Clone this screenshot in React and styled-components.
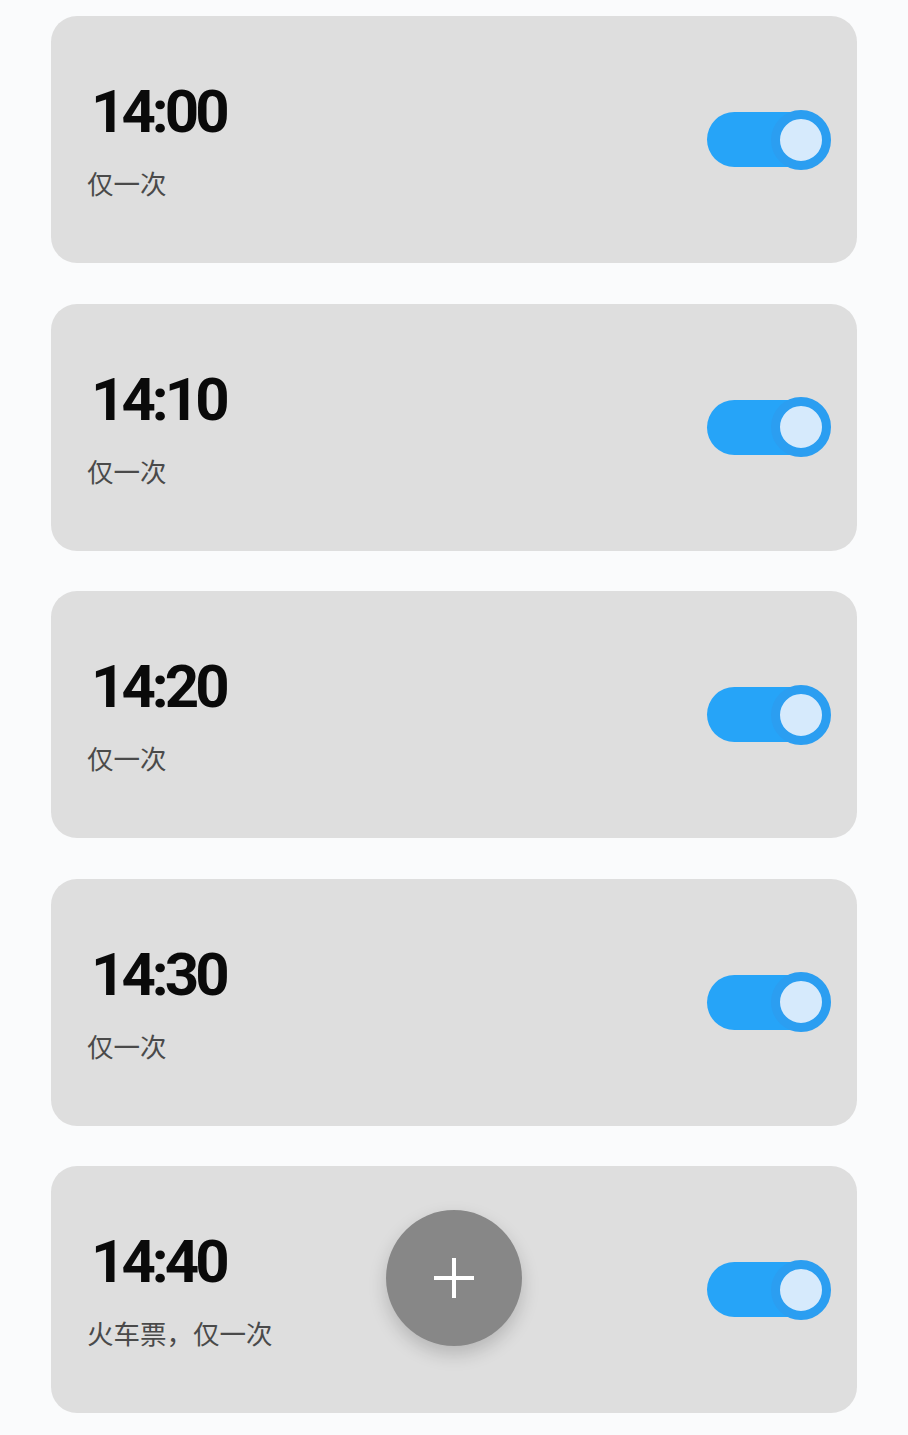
import React from 'react';
import styled, { createGlobalStyle } from 'styled-components';

const GlobalStyle = createGlobalStyle`
  html, body {
    margin: 0;
    padding: 0;
    background: #fafbfc;
  }
  body {
    font-family: Roboto, "Noto Sans CJK SC", sans-serif;
  }
`;

const Page = styled.div`
  width: 908px;
  min-height: 1435px;
  box-sizing: border-box;
  padding: 16px 51px 22px;
  display: flex;
  flex-direction: column;
  gap: 40.5px;
`;

const Card = styled.div`
  height: 247px;
  flex-shrink: 0;
  box-sizing: border-box;
  background: #dedede;
  border-radius: 26px;
  padding: 0 26px 0 36px;
  display: flex;
  align-items: center;
  justify-content: space-between;
`;

const Info = styled.div`
  display: flex;
  flex-direction: column;
  margin-top: -1px;
`;

const Time = styled.div`
  font-family: Roboto, sans-serif;
  font-weight: 700;
  font-size: 60px;
  line-height: 60px;
  letter-spacing: -4px;
  color: #0a0a0a;
  padding-left: 4px;
`;

const Repeat = styled.div`
  margin-top: 28px;
  font-family: "Noto Sans CJK SC", sans-serif;
  font-size: 26.5px;
  line-height: 26px;
  color: #4a4a4a;
`;

const Switch = styled.div`
  position: relative;
  width: 124px;
  height: 60px;
  display: flex;
  align-items: center;
`;

const Track = styled.div`
  width: 118px;
  height: 55px;
  border-radius: 28px;
  background: ${({ $on }) => ($on ? '#26a4f8' : '#bdbdbd')};
`;

const Knob = styled.div`
  position: absolute;
  top: 0;
  right: 0;
  width: 60px;
  height: 60px;
  box-sizing: border-box;
  border-radius: 50%;
  border: 9px solid #2b9ef1;
  background: #d6eafc;
`;

const Fab = styled.button`
  position: fixed;
  left: 386px;
  bottom: 89px;
  width: 136px;
  height: 136px;
  border: none;
  border-radius: 50%;
  background: #878787;
  box-shadow: 0 8px 18px rgba(0, 0, 0, 0.18);
  display: flex;
  align-items: center;
  justify-content: center;
  padding: 0;
  cursor: pointer;
`;

const alarms = [
  { time: '14:00', label: '仅一次' },
  { time: '14:10', label: '仅一次' },
  { time: '14:20', label: '仅一次' },
  { time: '14:30', label: '仅一次' },
  { time: '14:40', label: '火车票，仅一次' }
];

const App = () => (
  <>
    <GlobalStyle />
    <Page>
      {alarms.map((a) => (
        <Card key={a.time}>
          <Info>
            <Time>{a.time}</Time>
            <Repeat>{a.label}</Repeat>
          </Info>
          <Switch>
            <Track $on />
            <Knob />
          </Switch>
        </Card>
      ))}
    </Page>
    <Fab type="button" aria-label="add">
      <svg width="42" height="42" viewBox="0 0 42 42">
        <path d="M21 1v40M1 21h40" stroke="#fff" strokeWidth="4" />
      </svg>
    </Fab>
  </>
);

export default App;
